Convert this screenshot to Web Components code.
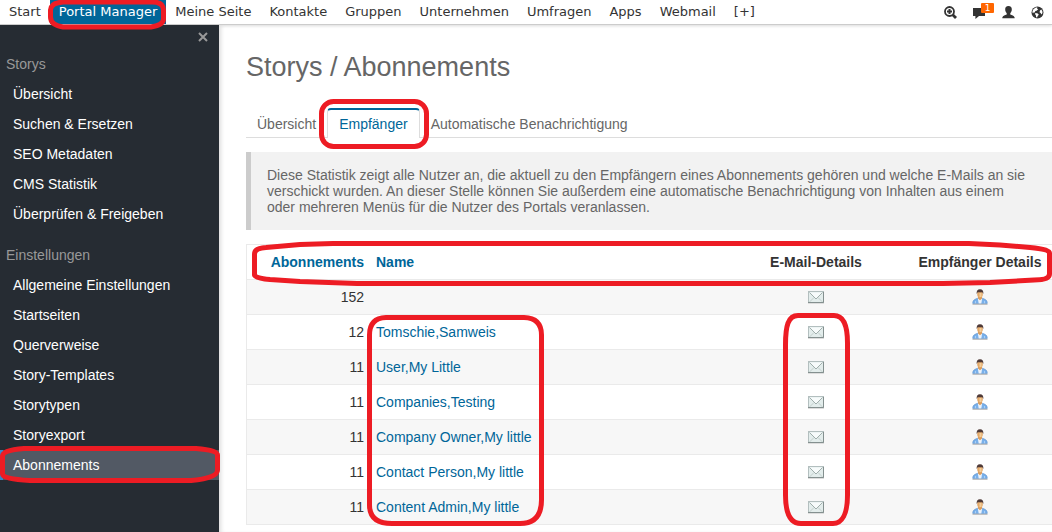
<!DOCTYPE html>
<html lang="de">
<head>
<meta charset="utf-8">
<title>Storys / Abonnements</title>
<style>
  body {
    margin: 0;
    background: #fff;
    color: #333;
    font: 14px/20px "Liberation Sans", Arial, sans-serif;
  }
</style>
</head>
<body>
<portal-page>
  <top-bar slot="top">
    <top-link>Start</top-link>
    <top-link active>Portal Manager</top-link>
    <top-link>Meine Seite</top-link>
    <top-link>Kontakte</top-link>
    <top-link>Gruppen</top-link>
    <top-link>Unternehmen</top-link>
    <top-link>Umfragen</top-link>
    <top-link>Apps</top-link>
    <top-link>Webmail</top-link>
    <top-link>[+]</top-link>
    <icon-button slot="tools" icon="search" label="Suche"></icon-button>
    <icon-button slot="tools" icon="comment" label="Nachrichten" badge="1"></icon-button>
    <icon-button slot="tools" icon="user" label="Profil"></icon-button>
    <icon-button slot="tools" icon="globe" label="Sprache"></icon-button>
  </top-bar>

  <side-bar slot="side">
    <side-group heading="Storys">
      <side-link>Übersicht</side-link>
      <side-link>Suchen &amp; Ersetzen</side-link>
      <side-link>SEO Metadaten</side-link>
      <side-link>CMS Statistik</side-link>
      <side-link>Überprüfen &amp; Freigeben</side-link>
    </side-group>
    <side-group heading="Einstellungen">
      <side-link>Allgemeine Einstellungen</side-link>
      <side-link>Startseiten</side-link>
      <side-link>Querverweise</side-link>
      <side-link>Story-Templates</side-link>
      <side-link>Storytypen</side-link>
      <side-link>Storyexport</side-link>
      <side-link active>Abonnements</side-link>
    </side-group>
  </side-bar>

  <page-title>Storys / Abonnements</page-title>
  <tab-bar>
    <tab-link>Übersicht</tab-link>
    <tab-link active>Empfänger</tab-link>
    <tab-link>Automatische Benachrichtigung</tab-link>
  </tab-bar>
  <info-box>Diese Statistik zeigt alle Nutzer an, die aktuell zu den Empfängern eines Abonnements gehören und welche E-Mails an sie verschickt wurden. An dieser Stelle können Sie außerdem eine automatische Benachrichtigung von Inhalten aus einem oder mehreren Menüs für die Nutzer des Portals veranlassen.</info-box>
  <recipient-table></recipient-table>
</portal-page>
<marker-layer></marker-layer>

<script>
const icons = {
  search: `<svg width="13" height="13" viewBox="0 0 13 13" fill="none" stroke="#333">
    <circle cx="5.5" cy="5.5" r="4.5" stroke-width="1.8"/>
    <path d="M8.7 8.7 12 12" stroke-width="2.8"/>
    <path d="M3 5.5h5M5.5 3v5" stroke-width="2"/></svg>`,
  comment: `<svg width="13" height="13" viewBox="0 0 13 13" fill="#333">
    <path d="M0 2h12v8H6l-3.6 3V10H0z"/></svg>`,
  user: `<svg width="13" height="13" viewBox="0 0 13 13" fill="#333">
    <path d="M6.5 0C8.8 0 9.9 1.4 9.8 3.4 9.8 5 9.1 6.2 8.3 7v1.6c1.5.8 4.4 1.2 4.4 3.6H.3C.3 9.8 3.2 9.4 4.7 8.600V7C3.900 6.200 3.200 5 3.200 3.400 3.100 1.400 4.200 0 6.500 0z"/></svg>`,
  globe: `<svg width="13" height="13" viewBox="0 0 13 13">
    <circle cx="6.5" cy="6.5" r="6" fill="#333"/>
    <path fill="#fff" d="M4.3 1.7 6.4 1.3 6 2.6 7.200 3.300 5.600 4.700 4.200 5.100 4 6.400 2.700 6.200 2.200 7.300 1.300 6.200 2 3.700zM4.600 7l2.200.5 1 1.200-1.200 1.300-.5 1.600-1-.3-.2-2.100-1-1.100zM9 4.600l1.300-1 1 1.500.2 1.800-1.100 1.700L9.600 7 8.500 6.200z"/></svg>`,
  mail: `<svg width="16" height="13" viewBox="0 0 16 13">
    <rect x=".5" y=".5" width="15" height="11" fill="#e3edec" stroke="#b3bfbf"/>
    <path d="M0 11.5h15.500V1" fill="none" stroke="#84908f"/>
    <path d="M1.500 11 6 6.500M14.500 11 10 6.500" stroke="#c4d0ce" fill="none"/>
    <path d="M1.500 1.500 8 8l6.500-6.500" fill="#f7fbfb" stroke="#a0aeac"/>
    <path d="M0 12.500h16" stroke="#ddd"/></svg>`,
  person: `<svg width="16" height="16" viewBox="0 0 16 16">
    <path d="M.8 14.500V13.500C.8 11.500 2.500 10.300 5.500 9.300h5c3 1 4.700 2.200 4.700 4.200v1z" fill="#79b0ea" stroke="#5a8fca" stroke-width=".6"/>
    <path d="M5.800 9.300h4.400L9.300 14.500H6.700z" fill="#edf3fa"/>
    <path d="M6 7h4v2.500L8 11.200 6 9.500z" fill="#d99c5e"/>
    <path d="M3.500 12V14.300M12.500 12V14.300" stroke="#a9cff5"/>
    <ellipse cx="8" cy="5" rx="2.800" ry="3.800" fill="#e2a868"/>
    <path d="M8.500 4v4" stroke="#f4cd98" stroke-width="2"/>
    <path d="M4.700 5C4.300 1.800 5.500.200 8 .200s3.700 1.600 3.300 4.800L10.300 3.200H5.700z" fill="#4f3a38"/>
    <path d="M.5 15.300h15" stroke="#b3b3b3"/></svg>`,
};

const recipients = [
  [152, ""],
  [12, "Tomschie,Samweis"],
  [11, "User,My Little"],
  [11, "Companies,Testing"],
  [11, "Company Owner,My little"],
  [11, "Contact Person,My little"],
  [11, "Content Admin,My little"],
];

class BaseElement extends HTMLElement {
  constructor() {
    super();
    this.attachShadow({ mode: "open" });
  }

  connectedCallback() {
    this.shadowRoot.innerHTML = this.render();
  }
}

class PortalPage extends BaseElement {
  render() {
    return `
      <style>
        :host { display: flex; flex-direction: column; min-height: 100vh; }
        .body { display: flex; flex: 1; }
        main { flex: 1; min-width: 0; padding-left: 27px; box-shadow: inset 4px 0 4px -2px #ddd; }
      </style>
      <slot name="top"></slot>
      <div class="body">
        <slot name="side"></slot>
        <main><slot></slot></main>
      </div>`;
  }
}

class TopBar extends BaseElement {
  render() {
    return `
      <style>
        :host {
          display: flex; justify-content: space-between; height: 24px;
          background: #fff; border-bottom: 1px solid #ccc; box-shadow: 0 1px 3px #ddd;
          font: 13px/24px "DejaVu Sans", Verdana, sans-serif;
        }
        nav { display: flex; }
        .tools { display: flex; gap: 16px; align-items: center; padding-right: 8px; }
      </style>
      <nav><slot></slot></nav>
      <div class="tools"><slot name="tools"></slot></div>`;
  }
}

class TopLink extends BaseElement {
  render() {
    return `
      <style>
        :host { display: block; }
        a { display: block; padding: 0 9px; color: #333; text-decoration: none; white-space: nowrap; }
        :host([active]) a { background: #069; color: #fff; }
      </style>
      <a href="#"><slot></slot></a>`;
  }
}

class IconButton extends BaseElement {
  render() {
    const badge = this.getAttribute("badge");
    return `
      <style>
        :host { display: block; position: relative; }
        button { display: block; padding: 0; border: 0; background: none; cursor: pointer; }
        svg { display: block; }
        .badge {
          position: absolute; left: 8px; top: -3px; width: 13px; height: 10px;
          border-radius: 1px; background: #f60; color: #fff;
          font: 9px/10px "DejaVu Sans", Verdana, sans-serif; text-align: center;
        }
      </style>
      <button aria-label="${this.getAttribute("label")}">${icons[this.getAttribute("icon")]}${badge ? `<span class="badge">${badge}</span>` : ""}</button>`;
  }
}

class SideBar extends BaseElement {
  render() {
    return `
      <style>
        :host { display: block; width: 219px; flex: none; background: #262c33; }
        .close { display: flex; justify-content: flex-end; height: 24px; padding-right: 11px; }
        button { padding: 0; border: 0; background: none; cursor: pointer; }
        svg { display: block; }
        .groups { display: flex; flex-direction: column; gap: 11px; }
      </style>
      <div class="close">
        <button aria-label="Schließen"><svg width="10" height="10" viewBox="0 0 10 10"><path d="m1 1 8 8m0-8L1 9" stroke="#999" stroke-width="2"/></svg></button>
      </div>
      <div class="groups"><slot></slot></div>`;
  }
}

class SideGroup extends BaseElement {
  render() {
    return `
      <style>
        :host { display: block; }
        h2 { margin: 0; padding: 5px 6px; font: inherit; color: #999; }
      </style>
      <h2>${this.getAttribute("heading")}</h2>
      <slot></slot>`;
  }
}

class SideLink extends BaseElement {
  render() {
    return `
      <style>
        :host { display: block; }
        a { display: block; padding: 5px 10px; border-left: 3px solid transparent; color: #fff; text-decoration: none; }
        :host([active]) a { background: #525964; border-color: #38c; }
      </style>
      <a href="#"><slot></slot></a>`;
  }
}

class PageTitle extends BaseElement {
  render() {
    return `
      <style>
        :host { display: block; padding: 26px 0 25px; }
        h1 { margin: 0; font-size: 27px; line-height: 32px; font-weight: normal; color: #666; }
      </style>
      <h1><slot></slot></h1>`;
  }
}

class TabBar extends BaseElement {
  render() {
    return `
      <style>
        :host { display: block; border-bottom: 1px solid #ddd; }
        nav { display: flex; margin-bottom: -1px; }
      </style>
      <nav><slot></slot></nav>`;
  }
}

class TabLink extends BaseElement {
  render() {
    return `
      <style>
        :host { display: block; }
        a { display: block; padding: 4px 11px; border-top: 2px solid transparent; color: #666; text-decoration: none; white-space: nowrap; }
        :host([active]) a {
          background: #fff; color: #069; border: solid #ddd; border-width: 2px 1px 0;
          border-top-color: #069; border-radius: 4px 4px 0 0;
        }
      </style>
      <a href="#"><slot></slot></a>`;
  }
}

class InfoBox extends BaseElement {
  render() {
    return `
      <style>
        :host {
          display: block; margin: 14px 0; padding: 15px 24px 15px 16px;
          background: #f2f2f2; border-left: 5px solid #ccc; color: #666; line-height: 16px;
        }
      </style>
      <slot></slot>`;
  }
}

class RecipientTable extends BaseElement {
  render() {
    const rows = recipients.map(([count, name]) => `
      <tr>
        <td class="count">${count}</td>
        <td>${name ? `<a href="#">${name}</a>` : ""}</td>
        <td class="icon"><button aria-label="E-Mail-Details">${icons.mail}</button></td>
        <td class="icon"><button aria-label="Empfänger Details">${icons.person}</button></td>
      </tr>`).join("");
    return `
      <style>
        :host { display: block; }
        table { width: 100%; border-spacing: 0; border-left: 1px solid #eaeaea; border-bottom: 1px solid #eaeaea; table-layout: fixed; }
        th, td { box-sizing: border-box; height: 35px; padding: 0 6px; border-top: 1px solid #eaeaea; text-align: left; white-space: nowrap; }
        tbody tr:nth-child(odd) { background: #f7f7f7; }
        .count { width: 123px; text-align: right; }
        .mail { width: 184px; }
        .person { width: 144px; }
        .icon { text-align: center; }
        a { color: #069; text-decoration: none; }
        button { display: block; margin: 0 auto; padding: 0; border: 0; background: none; cursor: pointer; }
        svg { display: block; }
      </style>
      <table>
        <thead>
          <tr>
            <th class="count"><a href="#">Abonnements</a></th>
            <th><a href="#">Name</a></th>
            <th class="icon mail">E-Mail-Details</th>
            <th class="icon person">Empfänger Details</th>
          </tr>
        </thead>
        <tbody>${rows}</tbody>
      </table>`;
  }
}

// hand-drawn red rings over the page
class MarkerLayer extends BaseElement {
  render() {
    return `
      <style>
        :host { position: absolute; left: 0; top: 0; pointer-events: none; }
        svg { display: block; }
      </style>
      <svg width="1052" height="532" fill="none" stroke="#ed1c24" stroke-width="5" aria-hidden="true">
        <path d="M63 2H152Q163.500 2 163.500 10V19Q163.500 25 151 27H63Q50.500 25 50.500 17V10Q50.500 3 63 2z"/>
        <rect x="321.500" y="101.500" width="105" height="45" rx="12"/>
        <path d="M333 243.500H969L1000 245 1030 247.500Q1049.500 249 1049.500 253V274Q1049.500 280 1034 280L990 282.500 943 283.500H357L300 281.500 270 279.500Q254.500 278 254.500 275V254Q254.500 248 266 247.500L300 244.500z"/>
        <path d="M386 317.500H524Q541.500 318 541.500 335V500Q541.500 523.500 520 523.500H392Q369.500 523.500 369.500 505V335Q369.500 318 386 317.500z"/>
        <path d="M798 315.500H834C844 315.500 847.500 326 847.500 343V495C847.500 514 842 523.500 833 523.500H801C790 523.500 785.500 513 785.500 495V345C785.500 326 788 315.500 798 315.500z"/>
        <path d="M24 448.500H196Q217.500 450 217.500 455V470Q217.500 478 191 480.500H30Q2.500 479 2.500 474V456Q2.500 450 24 448.500z"/>
      </svg>`;
  }
}

customElements.define("portal-page", PortalPage);
customElements.define("top-bar", TopBar);
customElements.define("top-link", TopLink);
customElements.define("icon-button", IconButton);
customElements.define("side-bar", SideBar);
customElements.define("side-group", SideGroup);
customElements.define("side-link", SideLink);
customElements.define("page-title", PageTitle);
customElements.define("tab-bar", TabBar);
customElements.define("tab-link", TabLink);
customElements.define("info-box", InfoBox);
customElements.define("recipient-table", RecipientTable);
customElements.define("marker-layer", MarkerLayer);
</script>
</body>
</html>
